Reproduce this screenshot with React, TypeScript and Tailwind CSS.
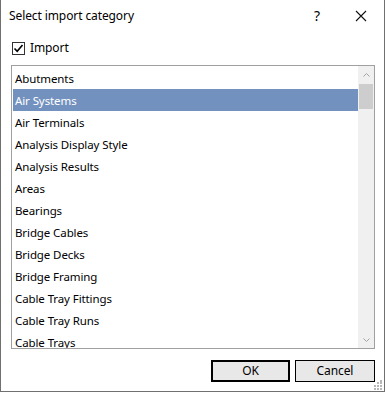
import React from "react";

const items = [
  "Abutments",
  "Air Systems",
  "Air Terminals",
  "Analysis Display Style",
  "Analysis Results",
  "Areas",
  "Bearings",
  "Bridge Cables",
  "Bridge Decks",
  "Bridge Framing",
  "Cable Tray Fittings",
  "Cable Tray Runs",
  "Cable Trays",
];

export default function App() {
  return (
    <div
      className="w-[386px] h-[393px] bg-white text-[11.5px] tracking-[-0.1px] text-black"
      style={{ fontFamily: '"Noto Sans", "Segoe UI", sans-serif' }}
    >
      <div className="relative w-[385px] h-[392px] bg-white border-l border-r border-b border-[#707070] flex flex-col">
        {/* Title bar */}
        <div className="h-[32px] flex items-center pl-[8px] shrink-0">
          <span className="leading-none text-[12px]">Select import category</span>
          <div className="ml-auto flex items-center h-full">
            <span className="w-[46px] text-center text-[14px] leading-none pl-[4px]">?</span>
            <div className="w-[46px] flex justify-center">
              <svg width="12" height="12" viewBox="0 0 12 12">
                <path d="M1 1 L11 11 M11 1 L1 11" stroke="#111" strokeWidth="1.1" fill="none" />
              </svg>
            </div>
          </div>
        </div>

        {/* Checkbox */}
        <div className="flex items-center ml-[11px] mt-[9px] h-[14px]">
          <div className="w-[13px] h-[13px] border border-[#333] flex items-center justify-center bg-white">
            <svg width="11" height="11" viewBox="0 0 11 11">
              <path d="M1.5 5.5 L4.2 8.3 L9.5 2" stroke="#000" strokeWidth="1.6" fill="none" />
            </svg>
          </div>
          <span className="ml-[5px] leading-none text-[12px]">Import</span>
        </div>

        {/* List box */}
        <div className="ml-[10px] mt-[10px] w-[364px] h-[284px] border border-[#a0a0a0] flex overflow-hidden shrink-0">
          <div className="flex-1 pt-[1px] pl-[1px] overflow-hidden">
            {items.map((it) => (
              <div
                key={it}
                className={
                  "h-[22px] flex items-center pl-[2px] pt-[2px] whitespace-nowrap " +
                  (it === "Air Systems" ? "bg-[#7391be] text-white" : "")
                }
              >
                {it}
              </div>
            ))}
          </div>
          <div className="w-[16px] h-full bg-[#f0f0f0] flex flex-col">
            <div className="h-[18px] flex items-center justify-center">
              <svg width="7" height="4" viewBox="0 0 7 4">
                <path d="M0.5 3.5 L3.5 0.5 L6.5 3.5" stroke="#a3a3a3" strokeWidth="1" fill="none" />
              </svg>
            </div>
            <div className="mx-[1px] h-[25px] bg-[#cdcdcd]" />
            <div className="flex-1" />
            <div className="h-[17px] flex items-center justify-center">
              <svg width="7" height="4" viewBox="0 0 7 4">
                <path d="M0.5 0.5 L3.5 3.5 L6.5 0.5" stroke="#a3a3a3" strokeWidth="1" fill="none" />
              </svg>
            </div>
          </div>
        </div>

        {/* Buttons */}
        <div className="flex justify-end gap-[5px] mt-[11px] mr-[9px]">
          <button className="w-[79px] h-[22px] border-2 border-black bg-[#e8e8e8] flex items-center justify-center leading-none text-[12px]">
            OK
          </button>
          <button className="w-[80px] h-[22px] border border-black bg-[#e8e8e8] flex items-center justify-center leading-none text-[12px]">
            Cancel
          </button>
        </div>

        {/* Size grip */}
        <svg className="absolute right-[1px] bottom-[1px]" width="10" height="10" viewBox="0 0 10 10">
          {[
            [8, 0], [8, 3], [5, 3], [8, 6], [5, 6], [2, 6], [8, 9], [5, 9], [2, 9],
          ].map(([x, y], i) => (
            <rect key={i} x={x - 1} y={y - 1 < 0 ? 0 : y - 1} width="2" height="2" fill="#b8b8b8" />
          ))}
        </svg>
      </div>
    </div>
  );
}
